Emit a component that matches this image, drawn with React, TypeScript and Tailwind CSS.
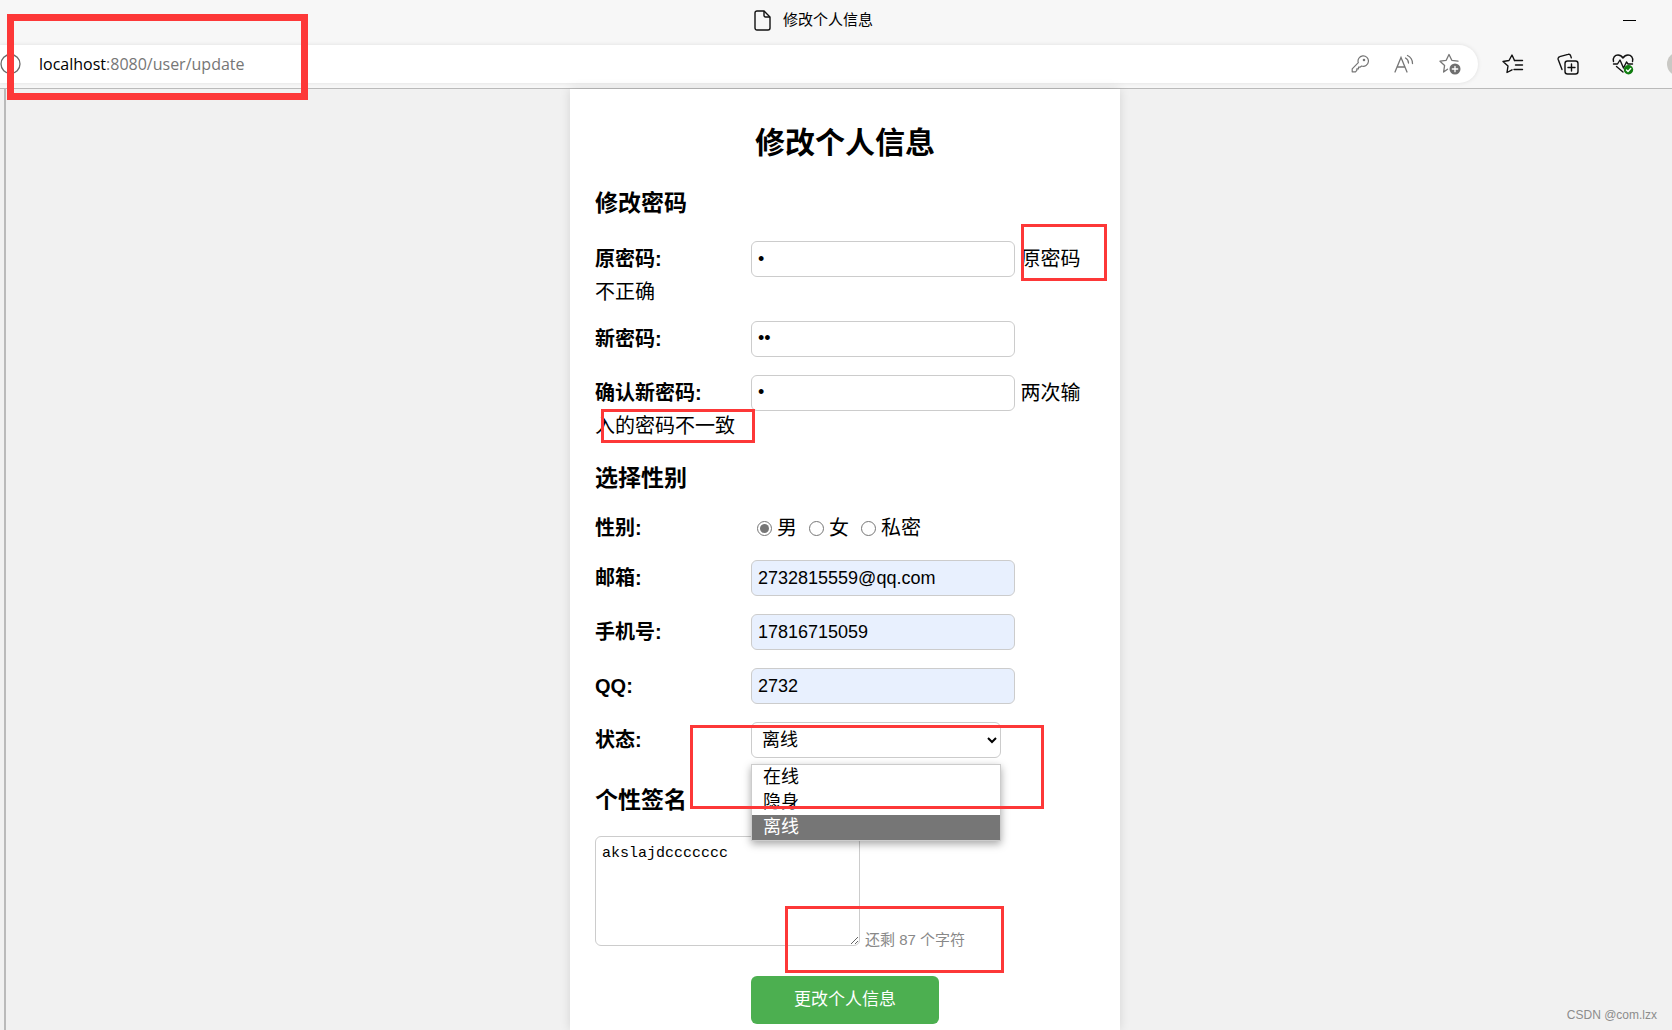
import { useState, type ReactNode } from "react";
import clsx from "clsx";

const MAX_SIGNATURE = 101;

const statuses = ["在线", "隐身", "离线"];
const genders = ["男", "女", "私密"];

function BrowserBar() {
	return (
		<header className="relative border-b border-[#bababa] bg-[#f7f7f7]">
			<div className="flex h-[45px] items-center pb-1">
				<div className="flex flex-1 items-center justify-center gap-3 pl-1 text-[15px] text-black">
					<svg
						className="h-[21px] w-[17px]"
						viewBox="0 0 17 21"
						fill="none"
						stroke="#111"
						strokeWidth="1.4"
					>
						<path d="M3 1h7l6 6v11a2 2 0 0 1-2 2H3a2 2 0 0 1-2-2V3a2 2 0 0 1 2-2z" />
						<path d="M10 1v4.500a1.500 1.500 0 0 0 1.500 1.500H16" />
					</svg>
					<span>修改个人信息</span>
				</div>
				<button
					type="button"
					aria-label="最小化"
					className="mr-9 h-px w-[13px] bg-black"
				/>
			</div>

			<div className="flex h-[43px] items-start">
				<div className="flex h-[38px] flex-1 items-center rounded-r-full bg-white pr-[17px] shadow-[0_0_4px_rgba(0,0,0,0.1)]">
					<svg
						className="h-[22px] w-[22px]"
						viewBox="0 0 22 22"
						fill="none"
						stroke="#6b6b6b"
						strokeWidth="1.3"
					>
						<circle cx="10.500" cy="11" r="9.500" />
					</svg>
					<div className="flex-1 pl-[17px] font-['Open_Sans',sans-serif] text-[16px] leading-[24px] text-[#767676]">
						<span className="text-black">localhost</span>:8080/user/update
					</div>
					<div className="flex items-center gap-[25px]">
						<button type="button" aria-label="密码">
							<svg
								className="h-[18px] w-[18px]"
								viewBox="0 0 18 18"
								fill="none"
								stroke="#767676"
								strokeWidth="1.200"
								strokeLinejoin="round"
							>
								<path d="M7.300 7.700A5.200 5.200 0 1 1 10.600 11L9 12.200H7.500v1.600H5.800v1.600L4.500 16.800H1.200v-3z" />
								<circle cx="13" cy="5" r="0.700" fill="#767676" />
							</svg>
						</button>
						<button type="button" aria-label="朗读">
							<svg
								className="h-[20px] w-[20px]"
								viewBox="0 0 20 20"
								fill="none"
								stroke="#767676"
								strokeWidth="1.300"
								strokeLinecap="round"
							>
								<path d="M1 18 7 3.500 13 18M3 13h8" />
								<path d="M11.500 4a6 6 0 0 1 3 5M13.500 1.500a9 9 0 0 1 5 8" />
							</svg>
						</button>
						<button type="button" aria-label="添加到收藏夹">
							<svg
								className="h-[22px] w-[22px]"
								viewBox="0 0 22 22"
								fill="none"
								stroke="#767676"
								strokeWidth="1.300"
								strokeLinejoin="round"
								strokeLinecap="round"
							>
								<path d="M8.500 16.200 4.600 19l1-6.600L1 8.200l6.200-.900L10 1.500l2.800 5.800 6.200.900" />
								<circle cx="16" cy="16" r="5.500" fill="#6e6e6e" stroke="none" />
								<path d="M13.300 16h5.400M16 13.300v5.400" stroke="#fff" />
							</svg>
						</button>
					</div>
				</div>
				<div className="flex h-[38px] items-center gap-[33px] pl-6">
					<button type="button" aria-label="收藏夹">
						<svg
							className="h-[22px] w-[22px]"
							viewBox="0 0 22 22"
							fill="none"
							stroke="#111"
							strokeWidth="1.400"
							strokeLinejoin="round"
							strokeLinecap="round"
						>
							<path d="M10 16.800 5 19.500l1-6.500L1 8.500l6-1L10 2l2.500 5.500" />
							<path d="M12.500 7.500h8M13.500 12h7M12 16.500h8.500" />
						</svg>
					</button>
					<button type="button" aria-label="集锦">
						<svg
							className="h-[22px] w-[22px]"
							viewBox="0 0 22 22"
							fill="none"
							stroke="#111"
							strokeWidth="1.400"
							strokeLinejoin="round"
							strokeLinecap="round"
						>
							<rect x="8" y="8" width="13" height="13" rx="2.500" />
							<path d="M14.500 11v7M11 14.500h7" />
							<path d="M5 16.500 1.200 6.500C.800 5.200 1.500 4 2.700 3.700l8.300-2.300c1.300-.400 2.300.300 2.700 1.500l.600 2" />
						</svg>
					</button>
					<button type="button" aria-label="浏览器概要">
						<svg
							className="h-[22px] w-[22px]"
							viewBox="0 0 22 22"
							fill="none"
							stroke="#111"
							strokeWidth="1.400"
							strokeLinejoin="round"
							strokeLinecap="round"
						>
							<path d="M1.500 8.500C.500 4.500 3 2 6 2c2.300 0 3.800 1.200 5 3 1.200-1.800 2.700-3 5-3 3 0 5.500 2.500 4.500 6.500" />
							<path d="M1.500 11h4l2.500-4 3.500 8 3-6 1.500 2h4.500M4.500 13.500l6.500 5.500" />
							<circle cx="16.500" cy="16.800" r="4.700" fill="#107c10" stroke="none" />
							<path d="m14.500 17 1.500 1.500 2.700-3" stroke="#fff" />
						</svg>
					</button>
					<div className="w-[5px] overflow-hidden">
						<div className="h-[24px] w-[24px] rounded-full bg-[#c9c8c4]" />
					</div>
				</div>
			</div>

			<Marker className="left-[7px] top-[14px] h-[86px] w-[301px] border-7" />
		</header>
	);
}

// Red highlight frame that lies over the page
function Marker({ className }: { className: string }) {
	return (
		<div
			className={clsx(
				"pointer-events-none absolute z-20 border-[#fd3838]",
				className,
			)}
		/>
	);
}

function SectionTitle({
	children,
	className,
}: {
	children: ReactNode;
	className: string;
}) {
	return (
		<h2 className={clsx("text-[23px] leading-[32px] font-bold", className)}>
			{children}
		</h2>
	);
}

const labelClass = "inline-block w-[156px] align-middle font-bold";

function Field({
	id,
	label,
	type = "text",
	value,
	filled,
	error,
	className,
}: {
	id: string;
	label: string;
	type?: string;
	value: string;
	filled?: boolean;
	error?: string;
	className: string;
}) {
	return (
		<div className={clsx("leading-[26px]", className)}>
			<label htmlFor={id} className={labelClass}>
				{label}:
			</label>
			<input
				id={id}
				type={type}
				defaultValue={value}
				className={clsx(
					"inline-block h-[36px] w-[264px] rounded-md border border-[#ccc] px-[6px] align-middle text-[18px] outline-none",
					filled ? "bg-[#e8f0fe]" : "bg-white",
				)}
			/>
			{error && <span className="align-middle"> {error}</span>}
		</div>
	);
}

export default function App() {
	const [gender, setGender] = useState("男");
	const [status, setStatus] = useState("离线");
	const [signature, setSignature] = useState("akslajdccccccc");

	return (
		<div className="flex min-h-screen flex-col bg-[#f1f1f1] font-['Liberation_Sans','Noto_Sans_CJK_SC',sans-serif] text-black">
			<BrowserBar />
			<main className="relative ml-1 flex flex-1 justify-center border-l-2 border-[#bababa] pl-3">
				<form
					onSubmit={(e) => e.preventDefault()}
					className="relative w-[550px] bg-white px-[25px] pt-8 pb-[6px] text-[20px] leading-[32px] shadow-[0_0_10px_rgba(0,0,0,0.12)]"
				>
					<h1 className="text-center text-[30px] leading-[44px] font-bold">
						修改个人信息
					</h1>

					<SectionTitle className="mt-[22px]">修改密码</SectionTitle>
					<Field
						id="oldPassword"
						label="原密码"
						type="password"
						value="1"
						error="原密码不正确"
						className="mt-[22px]"
					/>
					<Field
						id="newPassword"
						label="新密码"
						type="password"
						value="12"
						className="mt-4"
					/>
					<Field
						id="confirmPassword"
						label="确认新密码"
						type="password"
						value="1"
						error="两次输入的密码不一致"
						className="mt-[18px]"
					/>

					<SectionTitle className="mt-6">选择性别</SectionTitle>
					<fieldset className="mt-[18px] flex items-center">
						<legend className="float-left w-[156px] font-bold">性别:</legend>
						<div className="flex gap-3 pl-[6px]">
							{genders.map((item) => (
								<label key={item} className="flex items-center gap-[5px]">
									<input
										type="radio"
										name="gender"
										checked={gender === item}
										onChange={() => setGender(item)}
										className="h-[15px] w-[15px] accent-[#767676]"
									/>
									{item}
								</label>
							))}
						</div>
					</fieldset>
					<Field
						id="email"
						label="邮箱"
						value="2732815559@qq.com"
						filled
						className="mt-4"
					/>
					<Field
						id="phone"
						label="手机号"
						value="17816715059"
						filled
						className="mt-[18px]"
					/>
					<Field id="qq" label="QQ" value="2732" filled className="mt-[18px]" />

					<div className="relative mt-[18px]">
						<label htmlFor="status" className={labelClass}>
							状态:
						</label>
						<select
							id="status"
							value={status}
							onChange={(e) => setStatus(e.target.value)}
							className="h-[36px] w-[250px] rounded-md border border-[#ccc] bg-white pl-[6px] align-middle text-[18px] outline-none"
						>
							{statuses.map((item) => (
								<option key={item}>{item}</option>
							))}
						</select>
						<ul
							role="listbox"
							aria-label="状态"
							className="absolute top-[42px] left-[156px] z-10 w-[250px] border border-[#ccc] bg-white text-[18px] leading-[25px] shadow-[0_3px_8px_rgba(0,0,0,0.35)]"
						>
							{statuses.map((item) => (
								<li
									key={item}
									role="option"
									aria-selected={item === status}
									onClick={() => setStatus(item)}
									className={clsx(
										"pl-[11px]",
										item === status && "bg-[#767676] text-white",
									)}
								>
									{item}
								</li>
							))}
						</ul>
					</div>

					<SectionTitle className="mt-[26px]">
						<label htmlFor="signature">个性签名</label>
					</SectionTitle>
					<div className="mt-5 flex items-end gap-[5px]">
						<textarea
							id="signature"
							value={signature}
							onChange={(e) => setSignature(e.target.value)}
							className="block h-[110px] w-[265px] rounded-md border border-[#ccc] px-[6px] py-[6px] font-['Liberation_Mono',monospace] text-[15px] leading-[22px] outline-none"
						/>
						<span className="text-[15px] leading-[12px] text-[#888]">
							还剩 {MAX_SIGNATURE - signature.length} 个字符
						</span>
					</div>

					<button
						type="submit"
						className="mt-[30px] ml-[156px] block h-[48px] w-[188px] rounded-md bg-[#4caf50] text-[17px] text-white"
					>
						更改个人信息
					</button>

					<Marker className="top-[135px] left-[451px] h-[57px] w-[86px] border-3" />
					<Marker className="top-[320px] left-[31px] h-[34px] w-[154px] border-3" />
					<Marker className="top-[636px] left-[120px] h-[84px] w-[354px] border-3" />
					<Marker className="top-[817px] left-[215px] h-[67px] w-[219px] border-3" />
				</form>
				<span className="absolute right-[15px] bottom-[6px] text-[12px] leading-[18px] text-[#8c8c8c]">
					CSDN @com.lzx
				</span>
			</main>
		</div>
	);
}
